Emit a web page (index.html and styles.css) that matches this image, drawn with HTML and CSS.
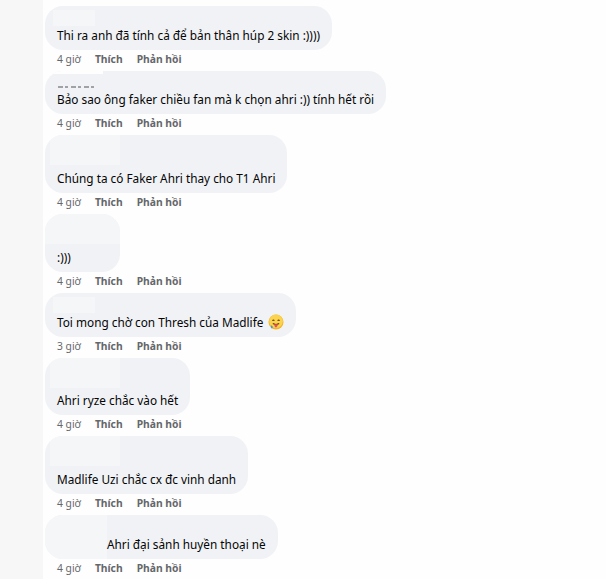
FILE: index.html
```html
<!DOCTYPE html>
<html lang="vi">
<head>
<meta charset="utf-8">
<link rel="stylesheet" href="styles.css">
</head>
<body>
<div class="page">
  <div class="strip"></div>
  <div class="comments">
    <div class="comment">
      <div class="bubble short"><span class="patch p1"></span><span class="text">Thi ra anh đã tính cả để bản thân húp 2 skin :))))</span></div>
      <div class="actions"><span class="time">4 giờ</span><span class="act">Thích</span><span class="act">Phản hồi</span></div>
    </div>
    <div class="comment">
      <div class="bubble short b2"><span class="patch p2"></span><span class="frag"></span><span class="text">Bảo sao ông faker chiều fan mà k chọn ahri :)) tính hết rồi</span></div>
      <div class="actions"><span class="time">4 giờ</span><span class="act">Thích</span><span class="act">Phản hồi</span></div>
    </div>
    <div class="comment">
      <div class="bubble tall"><span class="patch p3"></span><span class="text">Chúng ta có Faker Ahri thay cho T1 Ahri</span></div>
      <div class="actions"><span class="time">4 giờ</span><span class="act">Thích</span><span class="act">Phản hồi</span></div>
    </div>
    <div class="comment">
      <div class="bubble tall w4"><span class="patch p4"></span><span class="text">:)))</span></div>
      <div class="actions"><span class="time">4 giờ</span><span class="act">Thích</span><span class="act">Phản hồi</span></div>
    </div>
    <div class="comment">
      <div class="bubble short"><span class="patch p1"></span><span class="text">Toi mong chờ con Thresh của Madlife <svg class="emoji" viewBox="0 0 16 16" width="16" height="16"><circle cx="8" cy="8" r="7.5" fill="#f2b52a"/><circle cx="8" cy="7.3" r="6.8" fill="#fcd34d"/><path d="M4.4 6.6 Q5.4 5.6 6.4 6.6" stroke="#5a3b14" stroke-width="1.1" fill="none"/><path d="M9.6 6.6 Q10.6 5.6 11.6 6.6" stroke="#5a3b14" stroke-width="1.1" fill="none"/><path d="M4.8 9.6 Q8 11.4 11.2 9.6" stroke="#6b3f10" stroke-width="1.1" fill="none"/><path d="M6.2 10.3 Q6.4 13.6 8.2 13.4 Q9.8 13.2 9.8 10.3 Z" fill="#e2505a"/><path d="M3.2 11.2 Q2.4 13.4 3.6 14.6 Q5.2 14.4 4.6 12.2 Z" fill="#3b9be0"/></svg></span></div>
      <div class="actions"><span class="time">3 giờ</span><span class="act">Thích</span><span class="act">Phản hồi</span></div>
    </div>
    <div class="comment">
      <div class="bubble tall b6"><span class="patch p3"></span><span class="text">Ahri ryze chắc vào hết</span></div>
      <div class="actions"><span class="time">4 giờ</span><span class="act">Thích</span><span class="act">Phản hồi</span></div>
    </div>
    <div class="comment">
      <div class="bubble tall"><span class="patch p3"></span><span class="text">Madlife Uzi chắc cx đc vinh danh</span></div>
      <div class="actions"><span class="time">4 giờ</span><span class="act">Thích</span><span class="act">Phản hồi</span></div>
    </div>
    <div class="comment">
      <div class="bubble short"><span class="patch p8"></span><span class="text shift">Ahri đại sảnh huyền thoại nè</span></div>
      <div class="actions"><span class="time">4 giờ</span><span class="act">Thích</span><span class="act">Phản hồi</span></div>
    </div>
  </div>
</div>
</body>
</html>
```
FILE: styles.css
```css
html, body {
  margin: 0;
  padding: 0;
  background: #fefefe;
}
body {
  font-family: "Noto Sans", "Open Sans", "DejaVu Sans", sans-serif;
  color: #050505;
  width: 606px;
  height: 579px;
  overflow: hidden;
}
.page {
  display: flex;
  height: 579px;
}
.strip {
  width: 43px;
  flex: none;
  background: #f7f7f7;
}
.comments {
  display: flex;
  flex-direction: column;
  align-items: flex-start;
  padding: 6px 0 0 2px;
}
.comment {
  display: flex;
  flex-direction: column;
  align-items: flex-start;
}
.bubble {
  position: relative;
  box-sizing: border-box;
  display: flex;
  align-items: flex-end;
  background: #f0f2f5;
  border-radius: 18px;
  padding: 0 12px 6px 12px;
  overflow: hidden;
}
.bubble.short { height: 44px; }
.bubble.b2 { height: 43px; }
.bubble.tall { height: 58px; }
.bubble.b6 { height: 57px; }
.bubble.w4 { width: 75px; }
.text {
  position: relative;
  font-size: 11.8px;
  line-height: 17px;
  white-space: nowrap;
  display: inline-flex;
  align-items: center;
}
.text.shift { margin-left: 50px; }
.emoji {
  margin-left: 5px;
  margin-top: -2px;
}
.frag {
  position: absolute;
  left: 13px;
  top: 15px;
  width: 36px;
  height: 2px;
  background: repeating-linear-gradient(90deg, #6a6c70 0 5px, transparent 5px 7px, #6a6c70 7px 10px, transparent 10px 13px);
  opacity: 0.6;
}
.patch {
  position: absolute;
  background: #f5f6f8;
}
.patch.p1 { left: 8px; top: 4px; width: 42px; height: 16px; }
.patch.p2 { left: 4px; top: -1px; width: 54px; height: 4px; background: #fefefe; }
.patch.p3 { left: 5px; top: 0; width: 70px; height: 30px; }
.patch.p4 { left: 0; top: 0; width: 75px; height: 30px; }
.patch.p8 { left: 0; top: 0; width: 62px; height: 44px; }
.actions {
  display: flex;
  align-items: center;
  box-sizing: border-box;
  height: 21px;
  padding: 0 0 3px 12px;
  gap: 14px;
  font-size: 10.3px;
  line-height: 14px;
  color: #65676b;
}
.actions .time { font-weight: 400; }
.actions .act { font-weight: 700; }
```
